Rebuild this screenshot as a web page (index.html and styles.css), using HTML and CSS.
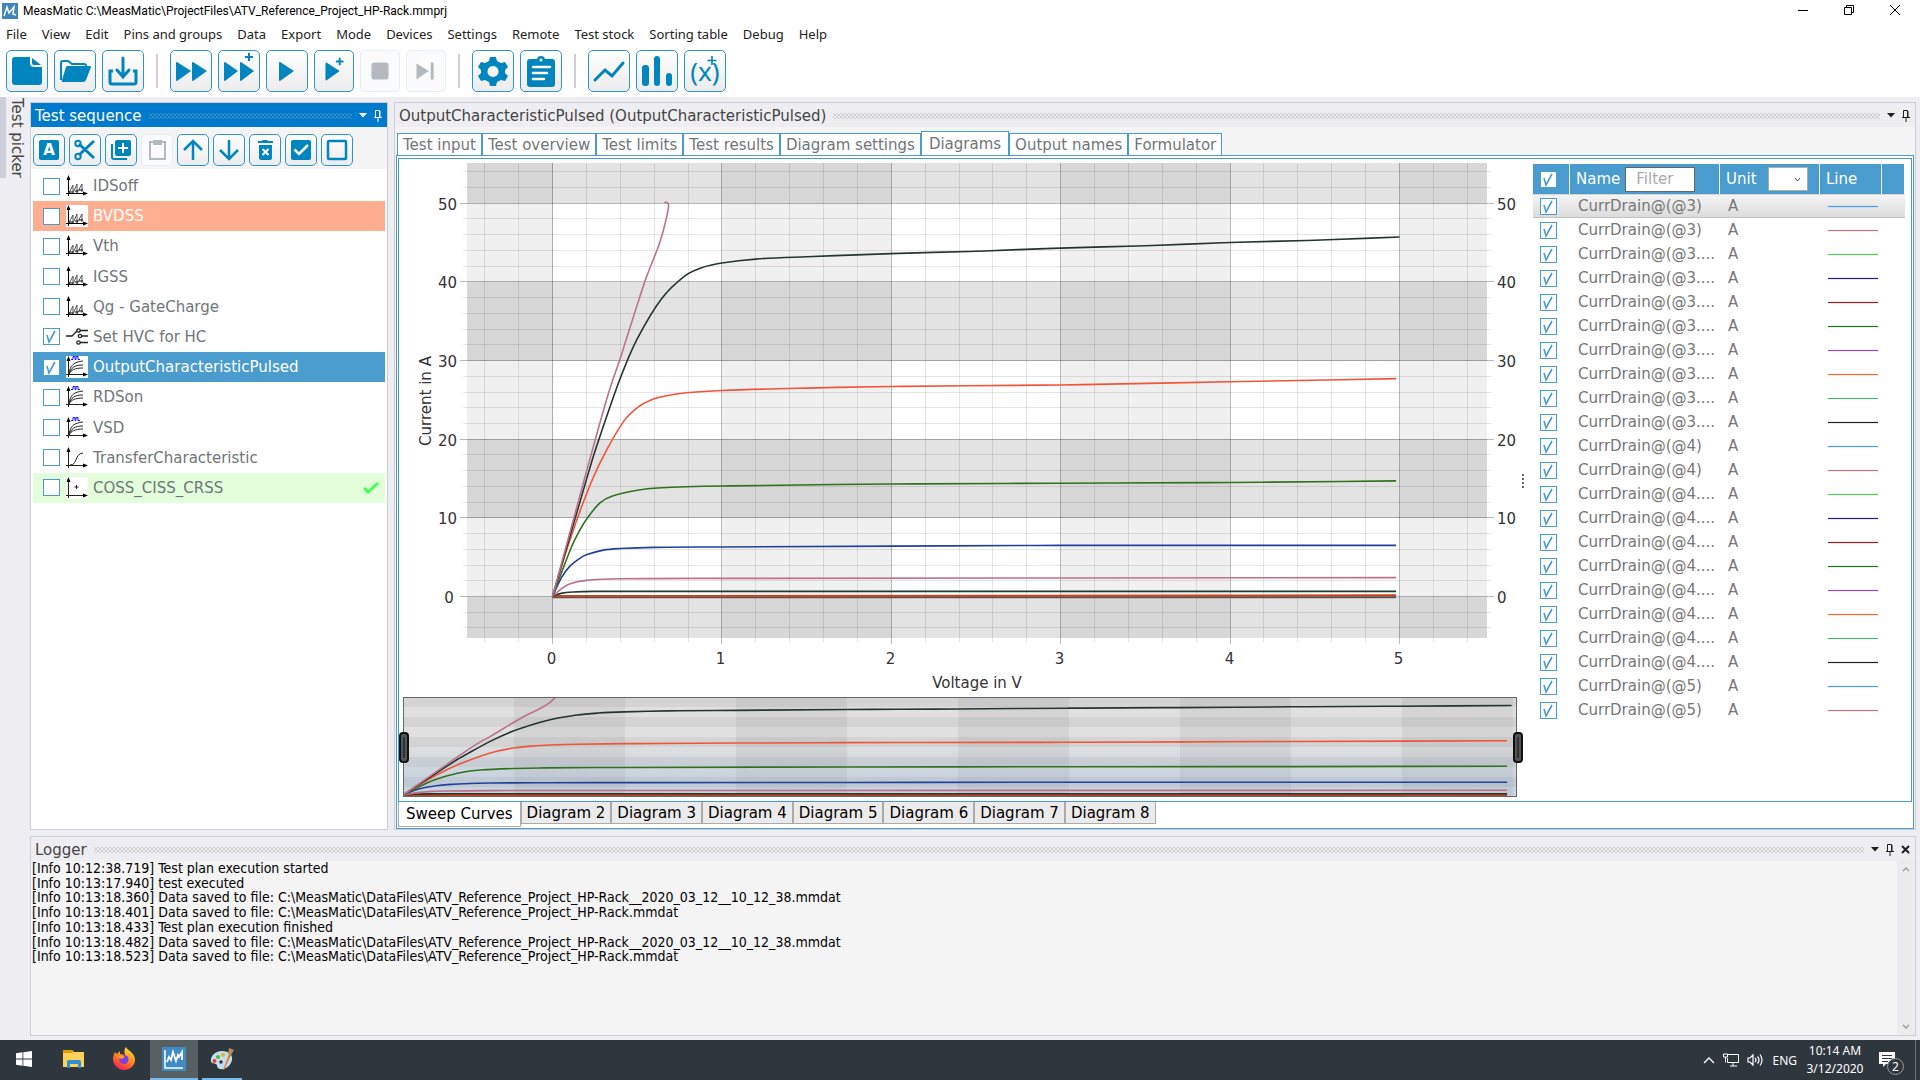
FILE: index.html
```html
<!DOCTYPE html>
<html lang="en">
  <head>
    <meta charset="utf-8" />
    <title>MeasMatic</title>
    <link rel="stylesheet" href="styles.css">
  </head>
  <body>
    <svg class="sprite" aria-hidden="true">
      <symbol id="i-multi" viewBox="0 0 22 22">
        <g fill="none" stroke="#000">
          <path d="M2.5 21V3M0 18.500H19"/>
          <path d="M3 18l4-8v8l4-9v9l5-9v8" stroke="#555"/>
          <path d="M3 17h4M9 16h3M13 15h4" stroke-width="1"/>
        </g>
        <path d="M2.500 0L.5 5h4zM22 18.500l-5-2v4z"/>
      </symbol>
      <symbol id="i-curves" viewBox="0 0 22 22">
        <g fill="none" stroke="#222">
          <path d="M2.500 21V3M0 18.500H19"/>
          <path d="M3 18C4 9 8 6 17 5M3 18c2-6 5-9 14-9M3 18c2-4 6-6 14-6"/>
        </g>
        <path d="M2.500 0L.5 5h4zM22 18.500l-5-2v4z"/>
        <path d="M5 3.500h2v-3h2v3h1v-3h2v3h2" fill="none" stroke="#11f"/>
      </symbol>
      <symbol id="i-transfer" viewBox="0 0 22 22">
        <path d="M2.500 21V3M0 18.500H19M4 18c8 0 4-11 13-12" fill="none" stroke="#222"/>
        <path d="M2.500 0L.5 5h4zM22 18.500l-5-2v4z"/>
      </symbol>
      <symbol id="i-point" viewBox="0 0 22 22">
        <path d="M2.500 21V3M0 18.500H19M10.500 8v4M8.500 10h4" fill="none" stroke="#222"/>
        <path d="M2.500 0L.5 5h4zM22 18.500l-5-2v4z"/>
      </symbol>
      <symbol id="i-switch" viewBox="0 0 22 22">
        <g fill="none" stroke="#222" stroke-width="1.300">
          <path d="M0 10h6l5-5M14 4.500h8M16 10h6M14 16.500h8"/>
          <circle cx="12.500" cy="4.500" r="1.700"/><circle cx="14" cy="10" r="1.700"/><circle cx="12.500" cy="16.500" r="1.700"/>
        </g>
      </symbol>
      <symbol id="i-pin" viewBox="0 0 8 12">
        <path d="M1.500 7V.5h4V7M0 7.500h8M4 8v4" fill="none" stroke="currentColor"/>
        <path d="M5 1h1.500v6H5z" fill="currentColor"/>
      </symbol>
      <symbol id="i-down" viewBox="0 0 8 5"><path d="M0 0h8L4 4.500z" fill="currentColor"/></symbol>
    </svg>

    <header class="titlebar">
      <svg class="app-logo" viewBox="0 0 16 16"><rect width="16" height="16" fill="#3d85bd"/><path d="M2 13L5 4l2 6 5-6-1 7 3 1" fill="none" stroke="#fff" stroke-width="1.500"/></svg>
      <span class="app-title">MeasMatic C:\MeasMatic\ProjectFiles\ATV_Reference_Project_HP-Rack.mmprj</span>
      <div class="window-buttons">
        <button aria-label="Minimize"><svg width="12" height="12" viewBox="0 0 12 12"><path d="M1 6.500h10" stroke="#000"/></svg></button>
        <button aria-label="Restore"><svg width="12" height="12" viewBox="0 0 12 12"><path d="M1.500 3.500h7v7h-7zM3.500 3V1.500h7v7H9" fill="none" stroke="#000"/></svg></button>
        <button aria-label="Close"><svg width="12" height="12" viewBox="0 0 12 12"><path d="M1 1l10 10M11 1L1 11" stroke="#000"/></svg></button>
      </div>
    </header>

    <nav class="menubar">
      <a href="#">File</a>
      <a href="#">View</a>
      <a href="#">Edit</a>
      <a href="#">Pins and groups</a>
      <a href="#">Data</a>
      <a href="#">Export</a>
      <a href="#">Mode</a>
      <a href="#">Devices</a>
      <a href="#">Settings</a>
      <a href="#">Remote</a>
      <a href="#">Test stock</a>
      <a href="#">Sorting table</a>
      <a href="#">Debug</a>
      <a href="#">Help</a>
    </nav>

    <div class="toolbar">
      <button class="tool" aria-label="New"><svg viewBox="0 0 40 40"><path d="M8 6h15v6q0 4 4 4h8v15q0 3-3 3H8q-3 0-3-3V9q0-3 3-3z"/><path d="M25 7v5q0 2 2 2h7z"/></svg></button>
      <button class="tool" aria-label="Open"><svg viewBox="0 0 40 40"><path d="M6 29V12q0-2 2-2h5l4 3h12q2 0 2 2" fill="none" stroke="#0085be" stroke-width="2"/><path d="M12 15h23q1 0 1 1l-5 13q-1 2-3 2H8q-2 0-1-2l4-13z"/></svg></button>
      <button class="tool" aria-label="Save"><svg viewBox="0 0 40 40"><path d="M20 7v18M14 19l6 7 6-7" fill="none" stroke="#0085be" stroke-width="3" stroke-linecap="round"/><path d="M10 20H7v11q0 2 2 2h22q2 0 2-2V20h-3" fill="none" stroke="#0085be" stroke-width="3"/></svg></button>
      <span class="separator"></span>
      <button class="tool" aria-label="Run all"><svg viewBox="0 0 40 40"><path d="M5 12q0-1 1-1l14 9-14 10q-1 0-1-1zM21 12q0-1 1-1l14 9-14 10q-1 0-1-1z"/></svg></button>
      <button class="tool" aria-label="Run all and add"><svg viewBox="0 0 40 40"><path d="M5 12q0-1 1-1l13 9-13 10q-1 0-1-1zM21 12q0-1 1-1l13 9-13 10q-1 0-1-1zM29 2h2v3h3v2h-3v3h-2V7h-3V5h3z"/></svg></button>
      <button class="tool" aria-label="Run"><svg viewBox="0 0 40 40"><path d="M12 12q0-1 1-1l14 9-14 10q-1 0-1-1z"/></svg></button>
      <button class="tool narrow" aria-label="Run and add"><svg viewBox="0 0 40 40"><path d="M11 12q0-1 1-1l14 9-14 10q-1 0-1-1zM25 6h2v3h3v2h-3v3h-2v-3h-3V9h3z"/></svg></button>
      <button class="tool narrow" disabled aria-label="Stop"><svg viewBox="0 0 40 40"><rect x="11" y="11" width="18" height="18" rx="3"/></svg></button>
      <button class="tool narrow" disabled aria-label="Step"><svg viewBox="0 0 40 40"><path d="M10 12l13 8-13 9zM25 11h3v18h-3z"/></svg></button>
      <span class="separator"></span>
      <button class="tool" aria-label="Settings"><svg viewBox="0 0 40 40"><path fill-rule="evenodd" d="M17 6h6l1 4 4 2 4-1 3 5-3 3v3l3 3-3 5-4-1-4 2-1 4h-6l-1-4-4-2-4 1-3-5 3-3v-3l-3-3 3-5 4 1 4-2zM20 15a5.500 5.500 0 1 0 .01 0z"/></svg></button>
      <button class="tool" aria-label="Report"><svg viewBox="0 0 40 40"><rect x="6" y="8" width="28" height="28" rx="3"/><circle cx="20" cy="9" r="4"/><circle cx="20" cy="9" r="1.500" fill="#fff"/><path d="M12 16h17M12 22h14M12 28h11" stroke="#fff" stroke-width="2.500" stroke-linecap="round"/></svg></button>
      <span class="separator"></span>
      <button class="tool" aria-label="Line chart"><svg viewBox="0 0 40 40"><path d="M6 29l10-10 7 6 11-13" fill="none" stroke="#0085be" stroke-width="3" stroke-linecap="round"/></svg></button>
      <button class="tool" aria-label="Bar chart"><svg viewBox="0 0 40 40"><rect x="5" y="14" width="7" height="21" rx="3"/><rect x="17" y="5" width="6" height="30" rx="3"/><rect x="29" y="22" width="6" height="13" rx="3"/></svg></button>
      <button class="tool formula" aria-label="Formula">(x)<svg viewBox="0 0 40 40"><path d="M27 5v9M22.500 9.500h9" stroke="#0085be" stroke-width="1.600"/></svg></button>
    </div>

    <main class="workspace">
      <aside class="side-strip"><button class="side-tab">Test picker</button></aside>

      <div class="docks">
        <div class="top-docks">
          <section class="panel sequence">
            <div class="panel-head active">
              <h2>Test sequence</h2>
              <span class="grip"></span>
              <svg width="8" height="5"><use href="#i-down"/></svg>
              <svg width="8" height="12"><use href="#i-pin"/></svg>
            </div>
            <div class="mini-toolbar">
              <button class="mini" aria-label="Auto"><span class="letter">A</span></button>
              <button class="mini" aria-label="Cut"><svg viewBox="0 0 30 30"><path d="M9 9l15 14M9 20L24 6" stroke="#0085be" stroke-width="3"/><circle cx="8" cy="8.500" r="2.700" fill="none" stroke="#0085be" stroke-width="2"/><circle cx="8" cy="21.500" r="2.700" fill="none" stroke="#0085be" stroke-width="2"/></svg></button>
              <button class="mini" aria-label="Copy"><svg viewBox="0 0 30 30"><path d="M6 9v13q0 2 2 2h13" fill="none" stroke="#0085be" stroke-width="2"/><rect x="9" y="5" width="16" height="16" rx="2"/><path d="M17 8v10M12 13h10" stroke="#fff" stroke-width="2"/></svg></button>
              <button class="mini" disabled aria-label="Paste"><svg viewBox="0 0 30 30"><path d="M8 7h15v17H8z" fill="none" stroke="#b2babd" stroke-width="2"/><path d="M11 5h9v5h-9z"/></svg></button>
              <button class="mini" aria-label="Move up"><svg viewBox="0 0 30 30"><path d="M15 25V6M6 15l9-9 9 9" fill="none" stroke="#0085be" stroke-width="2.500"/></svg></button>
              <button class="mini" aria-label="Move down"><svg viewBox="0 0 30 30"><path d="M15 5v19M6 15l9 9 9-9" fill="none" stroke="#0085be" stroke-width="2.500"/></svg></button>
              <button class="mini" aria-label="Delete"><svg viewBox="0 0 30 30"><path d="M8 6h4l1-1h4l1 1h5v2H8zM9 10h13v13q0 2-2 2h-9q-2 0-2-2z"/><path d="M12.500 14l6 6M18.500 14l-6 6" stroke="#fff" stroke-width="2"/></svg></button>
              <button class="mini" aria-label="Check all"><svg viewBox="0 0 30 30"><rect x="5" y="5" width="20" height="20" rx="2"/><path d="M8.500 14.500l4.500 4.500 9-9" fill="none" stroke="#fff" stroke-width="2.500"/></svg></button>
              <button class="mini" aria-label="Uncheck all"><svg viewBox="0 0 30 30"><rect x="6" y="6" width="18" height="18" rx="1" fill="none" stroke="#0085be" stroke-width="2.500"/></svg></button>
            </div>
            <ul class="tests">
              <li><label><input type="checkbox" class="check"><svg class="kind"><use href="#i-multi"/></svg>IDSoff</label></li>
              <li class="failed"><label><input type="checkbox" class="check"><svg class="kind"><use href="#i-multi"/></svg>BVDSS</label></li>
              <li><label><input type="checkbox" class="check"><svg class="kind"><use href="#i-multi"/></svg>Vth</label></li>
              <li><label><input type="checkbox" class="check"><svg class="kind"><use href="#i-multi"/></svg>IGSS</label></li>
              <li><label><input type="checkbox" class="check"><svg class="kind"><use href="#i-multi"/></svg>Qg - GateCharge</label></li>
              <li><label><input type="checkbox" class="check" checked><svg class="kind"><use href="#i-switch"/></svg>Set HVC for HC</label></li>
              <li class="selected"><label><input type="checkbox" class="check" checked><svg class="kind"><use href="#i-curves"/></svg>OutputCharacteristicPulsed</label></li>
              <li><label><input type="checkbox" class="check"><svg class="kind"><use href="#i-curves"/></svg>RDSon</label></li>
              <li><label><input type="checkbox" class="check"><svg class="kind"><use href="#i-curves"/></svg>VSD</label></li>
              <li><label><input type="checkbox" class="check"><svg class="kind"><use href="#i-transfer"/></svg>TransferCharacteristic</label></li>
              <li class="passed"><label><input type="checkbox" class="check"><svg class="kind"><use href="#i-point"/></svg>COSS_CISS_CRSS</label><svg class="ok" viewBox="0 0 16 12"><path d="M1 6l4 4L15 1" fill="none" stroke="#4f5" stroke-width="3"/></svg></li>
            </ul>
          </section>

          <section class="panel document">
            <div class="panel-head">
              <h2>OutputCharacteristicPulsed (OutputCharacteristicPulsed)</h2>
              <span class="grip"></span>
              <svg width="8" height="5"><use href="#i-down"/></svg>
              <svg width="8" height="12"><use href="#i-pin"/></svg>
            </div>
            <div class="tabs">
              <button>Test input</button>
              <button>Test overview</button>
              <button>Test limits</button>
              <button>Test results</button>
              <button>Diagram settings</button>
              <button class="current">Diagrams</button>
              <button>Output names</button>
              <button>Formulator</button>
            </div>
            <div class="page">
              <div class="diagram">
                <svg id="chart" class="chart" viewBox="0 0 1120 642" role="img" aria-label="Sweep curves"></svg>
                <div class="splitter"></div>
                <table class="curves">
                  <colgroup><col class="c-check"><col class="c-name"><col class="c-unit"><col class="c-line"><col></colgroup>
                  <thead>
                    <tr>
                      <th><input type="checkbox" class="check" checked aria-label="All curves"></th>
                      <th><div class="filter"><label for="nameFilter">Name</label><input id="nameFilter" type="text" placeholder="Filter"></div></th>
                      <th><div class="filter"><label for="unitFilter">Unit</label><select id="unitFilter"><option></option><option>A</option></select></div></th>
                      <th>Line</th>
                      <th></th>
                    </tr>
                  </thead>
                  <tbody id="curveRows"></tbody>
                </table>
              </div>
              <div class="sheet-tabs">
                <button class="current">Sweep Curves</button>
                <button>Diagram 2</button>
                <button>Diagram 3</button>
                <button>Diagram 4</button>
                <button>Diagram 5</button>
                <button>Diagram 6</button>
                <button>Diagram 7</button>
                <button>Diagram 8</button>
              </div>
            </div>
          </section>
        </div>

        <section class="panel logger">
          <div class="panel-head">
            <h2>Logger</h2>
            <span class="grip"></span>
            <svg width="8" height="5"><use href="#i-down"/></svg>
            <svg width="8" height="12"><use href="#i-pin"/></svg>
            <svg width="9" height="9" viewBox="0 0 9 9"><path d="M1 1l7 7M8 1L1 8" stroke="currentColor" stroke-width="2"/></svg>
          </div>
          <div class="log-body">
            <ul class="log">
              <li>[Info 10:12:38.719] Test plan execution started</li>
              <li>[Info 10:13:17.940] test executed</li>
              <li>[Info 10:13:18.360] Data saved to file: C:\MeasMatic\DataFiles\ATV_Reference_Project_HP-Rack__2020_03_12__10_12_38.mmdat</li>
              <li>[Info 10:13:18.401] Data saved to file: C:\MeasMatic\DataFiles\ATV_Reference_Project_HP-Rack.mmdat</li>
              <li>[Info 10:13:18.433] Test plan execution finished</li>
              <li>[Info 10:13:18.482] Data saved to file: C:\MeasMatic\DataFiles\ATV_Reference_Project_HP-Rack__2020_03_12__10_12_38.mmdat</li>
              <li>[Info 10:13:18.523] Data saved to file: C:\MeasMatic\DataFiles\ATV_Reference_Project_HP-Rack.mmdat</li>
            </ul>
            <div class="scrollbar">
              <svg width="8" height="5" viewBox="0 0 8 5"><path d="M1 4l3-3 3 3" fill="none" stroke="#a0a0a0" stroke-width="1.500"/></svg>
              <svg width="8" height="5" viewBox="0 0 8 5"><path d="M1 1l3 3 3-3" fill="none" stroke="#a0a0a0" stroke-width="1.500"/></svg>
            </div>
          </div>
        </section>
      </div>
    </main>

    <footer class="taskbar">
      <button class="task" aria-label="Start"><svg width="16" height="16" viewBox="0 0 16 16" fill="#fff"><path d="M0 2.200L6.500 1.300v6.300H0zM7.300 1.200L16 0v7.600H7.300zM0 8.400h6.500v6.300L0 13.800zM7.300 8.400H16V16l-8.700-1.200z"/></svg></button>
      <button class="task" aria-label="File Explorer"><svg width="22" height="18" viewBox="0 0 22 18"><path d="M0 0h9l2 2h10v15H0z" fill="#ffd35a"/><path d="M0 0h9l1 3H0z" fill="#e0a100"/><path d="M4 18v-6q0-2 2-2h10q2 0 2 2v6h-3v-4H7v4z" fill="#2f8fd6"/></svg></button>
      <button class="task" aria-label="Firefox"><svg width="24" height="24" viewBox="0 0 24 24"><defs><linearGradient id="fox" x1=".8" y1="0" x2=".3" y2="1"><stop offset="0" stop-color="#ffe53a"/><stop offset=".5" stop-color="#ff8a1c"/><stop offset="1" stop-color="#f5185c"/></linearGradient></defs><path d="M14 0c1 3 8 5 9 12 0 7-5 11-11 11S1 18 1 12c0-3 1-5 2-7l2 2 3-3v3l5 1c-1-3-1-6 1-8z" fill="url(#fox)"/><circle cx="12" cy="12.500" r="4.500" fill="#7a3fe0"/><path d="M6 9q3-2 6 0 1 2-2 2.500-2 1-4-2.500z" fill="#ff9a1c"/></svg></button>
      <button class="task active" aria-label="MeasMatic"><svg width="24" height="24" viewBox="0 0 24 24"><rect width="24" height="24" fill="#3f8cc4"/><path d="M3 3v18h18" fill="none" stroke="#fff" stroke-width="1.500"/><path d="M5 15l2-5 2 3 2-8 3 9 2-6 1 2 3-5v8" fill="none" stroke="#fff" stroke-width="1.800"/></svg></button>
      <button class="task open" aria-label="Paint"><svg width="24" height="24" viewBox="0 0 24 24"><path d="M12 4c7 0 11 4 10 9s-6 10-12 9c-4-1-2-4-4-5s-6 0-5-5 6-8 11-8z" fill="#c3e0f0"/><circle cx="13" cy="8" r="2" fill="#f0b020"/><circle cx="8" cy="10" r="2" fill="#58b030"/><circle cx="4.500" cy="14" r="2" fill="#e04040"/><circle cx="11" cy="15" r="1.700" fill="#26303a"/><path d="M13 23l6-16 2 1-7 15z" fill="#e07a20"/><path d="M18 7l1-6 5 2-3 5z" fill="#b98b62"/></svg></button>
      <div class="tray">
        <svg width="12" height="8" viewBox="0 0 12 8"><path d="M1 7l5-5 5 5" fill="none" stroke="#fff" stroke-width="1.300"/></svg>
        <svg width="16" height="14" viewBox="0 0 16 14"><path d="M5 1.500h10.500v8H4.500V5M.5 1h4v3h-4zM2.500 4v5.500M10 10v3M7 13h7" fill="none" stroke="#fff"/></svg>
        <svg width="17" height="14" viewBox="0 0 17 14"><path d="M1 5h2l3-3v10L3 9H1zM8 5q2 2 0 4M10.500 3.500q3 3.500 0 7M13 1.500q4 5.500 0 11" fill="none" stroke="#fff" stroke-width="1.200"/></svg>
        <span class="lang">ENG</span>
        <time class="clock"><span>10:14 AM</span><span>3/12/2020</span></time>
        <button class="notice" aria-label="Notifications"><svg width="16" height="16" viewBox="0 0 16 16"><path d="M0 0h16v12H7l-3 3v-3H0z" fill="#fff"/><path d="M3 3.500h10M3 6.500h10M3 9.500h6" stroke="#2f373e"/></svg><span class="count">2</span></button>
      </div>
    </footer>

    <script src="script.js"></script>
  </body>
</html>
```
FILE: styles.css
```css
* {
  box-sizing: border-box;
}
body {
  margin: 0;
  height: 100vh;
  display: flex;
  flex-direction: column;
  overflow: hidden;
  background: #eeeef2;
  color: #6d6d6d;
  font-family: Verdana, "DejaVu Sans", sans-serif;
  font-size: 15px;
}
button, input, select {
  font: inherit;
  color: inherit;
  margin: 0;
}
button {
  border: none;
  background: none;
  padding: 0;
}
ul {
  list-style: none;
  margin: 0;
  padding: 0;
}
.sprite {
  display: none;
}

/* Window title and menu */
.titlebar {
  display: flex;
  align-items: center;
  gap: 5px;
  height: 22px;
  padding-left: 2px;
  background: #fff;
  color: #000;
  font-family: "Segoe UI", Roboto, sans-serif;
  font-size: 12px;
}
.app-logo {
  width: 16px;
  height: 16px;
}
.window-buttons {
  display: flex;
  margin-left: auto;
  margin-right: 2px;
}
.window-buttons button {
  width: 46px;
  height: 20px;
}
.menubar {
  display: flex;
  align-items: center;
  gap: 15px;
  height: 24px;
  padding-left: 6px;
  background: #fff;
  font-family: "Segoe UI", "Noto Sans", sans-serif;
  font-size: 13px;
}
.menubar a {
  color: #222;
  text-decoration: none;
}

/* Toolbars */
.toolbar {
  display: flex;
  align-items: flex-start;
  gap: 6px;
  height: 51px;
  padding: 4px 6px;
  background: #fff;
}
.tool {
  width: 42px;
  height: 42px;
  border: 1px solid #2e93c8;
  border-radius: 5px;
  background: linear-gradient(#fff, #ececee);
}
.tool.narrow {
  width: 40px;
}
.tool svg, .mini svg {
  display: block;
  width: 100%;
  height: 100%;
  fill: #0085be;
}
.tool:disabled, .mini:disabled {
  border-color: #dff0f8;
  background: #fbfbfb;
}
.tool:disabled svg, .mini:disabled svg {
  fill: #b2babd;
}
.formula {
  position: relative;
  color: #0085be;
  font-family: "Segoe UI", "Noto Sans", sans-serif;
  font-size: 26px;
  line-height: 38px;
}
.formula svg {
  position: absolute;
  inset: 0;
}
.separator {
  width: 2px;
  height: 34px;
  margin: 4px 6px 0;
  background: #d0d0d0;
}
.mini-toolbar {
  display: flex;
  gap: 4px;
  height: 42px;
  padding: 7px 2px;
  background: #f4f4f4;
}
.mini {
  width: 32px;
  height: 32px;
  border: 1px solid #2e93c8;
  border-radius: 5px;
  background: linear-gradient(#fff, #ececee);
}
.letter {
  display: block;
  width: 20px;
  margin: 0 auto;
  border-radius: 2px;
  background: #0085be;
  color: #fff;
  font-weight: bold;
  line-height: 20px;
}

/* Docked panels */
.workspace {
  flex: 1;
  display: flex;
  min-height: 0;
  padding: 0 4px 4px 0;
}
.side-strip {
  width: 30px;
}
.side-tab {
  height: 81px;
  border-left: 6px solid #ccceda;
  color: #444;
  line-height: 22px;
  white-space: nowrap;
  writing-mode: vertical-rl;
}
.docks {
  flex: 1;
  display: flex;
  flex-direction: column;
  gap: 6px;
  min-width: 0;
  padding-top: 5px;
}
.top-docks {
  flex: 1;
  display: flex;
  gap: 6px;
  min-height: 0;
}
.panel {
  display: flex;
  flex-direction: column;
  border: 1px solid #ccceda;
}
.sequence {
  width: 358px;
  background: #fff;
}
.document {
  flex: 1;
  min-width: 0;
  background: #f4f4f4;
}
.logger {
  height: 200px;
}
.panel-head {
  display: flex;
  align-items: center;
  gap: 7px;
  height: 24px;
  padding: 1px 5px 0 4px;
  background: #eeeef2;
  color: #1e1e1e;
}
.panel-head.active {
  background: #007acc;
  color: #fff;
}
.panel-head h2 {
  margin: 0;
  color: #444;
  font-size: 15px;
  font-weight: normal;
  white-space: nowrap;
}
.panel-head.active h2 {
  color: #fff;
}
.grip {
  flex: 1;
  height: 6px;
  background: radial-gradient(circle, #bbb 1px, transparent 1px) 0 0 / 4px 4px, radial-gradient(circle, #bbb 1px, transparent 1px) 2px 2px / 4px 4px;
  opacity: .6;
}
.active .grip {
  opacity: .3;
}

/* Test list */
.tests {
  display: grid;
  grid-auto-rows: 1fr;
  height: 332px;
  margin: 2px 2px 0;
}
.tests li {
  display: flex;
  align-items: center;
  padding: 0 6px 0 10px;
  color: #6f7679;
}
.tests label {
  flex: 1;
  display: flex;
  align-items: center;
}
.kind {
  width: 22px;
  height: 22px;
  margin: 0 5px 0 6px;
  background: #fff;
}
.tests .failed {
  background: #ffae8f;
  color: #fff;
}
.tests .selected {
  background: #4a9bce;
  color: #fff;
}
.tests .passed {
  background: #e2fedb;
}
.ok {
  width: 16px;
  height: 12px;
}
.check {
  appearance: none;
  flex: none;
  display: block;
  width: 17px;
  height: 17px;
  border: 1px solid #4a9bce;
  background: #fff;
}
.check:checked {
  background: #fff url("data:image/svg+xml,%3Csvg xmlns='http://www.w3.org/2000/svg' viewBox='0 0 15 15'%3E%3Cpath d='M3 6l2 7L11 2' fill='none' stroke='%234a9bce' stroke-width='1.600'/%3E%3C/svg%3E");
}

/* Document tabs */
.tabs {
  display: flex;
  align-items: flex-end;
  height: 28px;
  padding-left: 2px;
}
.tabs button {
  height: 22px;
  padding: 0 5px;
  border: 1px solid #4a9bce;
  border-bottom: none;
  background: #fff;
  color: #6f7679;
  white-space: nowrap;
}
.tabs .current {
  height: 24px;
  padding: 0 7px;
}
.page {
  flex: 1;
  display: flex;
  flex-direction: column;
  min-height: 0;
  margin: 0 1px;
  border: 1px solid #4a9bce;
  background: #fff;
}
.diagram {
  flex: 1;
  display: flex;
  min-height: 0;
  margin: 2px 1px 0;
  padding-right: 6px;
  border: 1px solid #4a9bce;
}
.chart {
  flex: 1;
  min-width: 0;
  height: 100%;
  overflow: visible;
}
.chart text {
  fill: #333;
  font-size: 15px;
}
.splitter {
  align-self: center;
  width: 8px;
  height: 16px;
  margin-right: 6px;
  background: linear-gradient(#666 50%, transparent 0) center / 2px 4px repeat-y;
}
.sheet-tabs {
  display: flex;
  height: 26px;
  padding-left: 1px;
}
.sheet-tabs button {
  height: 22px;
  padding: 0 5px;
  border: 1px solid #aaa;
  border-top: none;
  background: #ebebeb;
  color: #000;
}
.sheet-tabs .current {
  height: 25px;
  padding: 0 7px;
  background: #fff;
}

/* Curve list */
.curves {
  align-self: flex-start;
  width: 372px;
  margin-top: 5px;
  border-collapse: separate;
  border-spacing: 0;
  table-layout: fixed;
}
.c-check {
  width: 37px;
}
.c-name {
  width: 150px;
}
.c-unit {
  width: 100px;
}
.c-line {
  width: 62px;
}
.curves th {
  height: 30px;
  padding: 0 6px;
  border-right: 1px solid #fff;
  background: #4a9bce;
  color: #fff;
  font-weight: normal;
  text-align: left;
}
.curves td {
  height: 24px;
  padding: 0 8px;
  color: #777;
  line-height: 20px;
  white-space: nowrap;
}
.curves .check {
  margin-left: 1px;
}
.curves td .check {
  margin-left: -1px;
}
.curves .focused td {
  border-top: 1px solid #d5d5d5;
  border-bottom: 1px solid #c4c4c4;
  background: linear-gradient(#f4f4f4, #dcdcdc);
}
.filter {
  display: flex;
  align-items: center;
  gap: 5px;
}
.filter input {
  width: 70px;
  height: 25px;
  padding: 0 10px;
  border: 1px solid #666;
  background: #fff;
  color: #333;
}
.filter input::placeholder {
  color: #aaa;
}
.filter select {
  appearance: none;
  width: 40px;
  height: 24px;
  margin-left: 6px;
  border: 1px solid #ababab;
  border-radius: 0;
  background: #fff url("data:image/svg+xml,%3Csvg xmlns='http://www.w3.org/2000/svg' viewBox='0 0 7 5'%3E%3Cpath d='M1 1l2.500 3L6 1' fill='none' stroke='%23444'/%3E%3C/svg%3E") right 6px center / 7px 5px no-repeat;
}
.swatch {
  display: block;
  width: 50px;
  height: 1px;
  background: currentColor;
  box-shadow: 0 0 1px currentColor;
}

/* Logger */
.log-body {
  flex: 1;
  display: flex;
  background: #f4f4f4;
}
.log {
  flex: 1;
  display: grid;
  grid-auto-rows: 1fr;
  height: 103px;
  padding-left: 1px;
  color: #000;
  font-family: Tahoma, "DejaVu Sans Condensed", "DejaVu Sans", sans-serif;
  font-size: 14px;
  line-height: 14px;
}
.scrollbar {
  display: flex;
  flex-direction: column;
  align-items: center;
  justify-content: space-between;
  width: 18px;
  padding: 6px 0;
  background: #ececee;
}

/* Windows taskbar */
.taskbar {
  display: flex;
  height: 40px;
  background: #2f373e;
  color: #fff;
  font-family: "Segoe UI", "Noto Sans", sans-serif;
  font-size: 12px;
}
.task {
  display: flex;
  align-items: center;
  justify-content: center;
  width: 48px;
  margin-right: 2px;
  border-bottom: 2px solid transparent;
}
.task.active {
  background: #566063;
  border-color: #76b9ed;
}
.task.open {
  width: 40px;
  margin-left: 2px;
  border-color: #76b9ed;
}
.tray {
  display: flex;
  align-items: center;
  gap: 8px;
  margin-left: auto;
  margin-right: 4px;
  border-right: 1px solid #6a7076;
}
.clock {
  display: flex;
  flex-direction: column;
  align-items: center;
  width: 60px;
  line-height: 18px;
}
.notice {
  position: relative;
  width: 42px;
  padding-left: 6px;
  text-align: left;
}
.notice svg {
  display: block;
}
.count {
  position: absolute;
  left: 14px;
  top: 6px;
  width: 17px;
  height: 17px;
  border: 1px solid #999;
  border-radius: 50%;
  background: #2f373e;
  color: #fff;
  font-size: 12px;
  line-height: 15px;
  text-align: center;
}
```
FILE: script.js
```js
const SVG_NS = 'http://www.w3.org/2000/svg';
const chart = document.getElementById('chart');

// plot area inside the chart svg
const plot = { left: 68, right: 1088, top: 4, bottom: 479, x0: 153.5, y0: 437.5, ux: 169.4, uy: 7.865 };
// overview strip below it
const nav = { left: 4, right: 1118, top: 538, bottom: 638, x0: 4, y0: 636, ux: 221.7, uy: 1.96 };

// measured points: voltage in V, current in A
const curves = [
  { color: '#555', width: 2, points: [[0, -0.1], [4.98, -0.1]] },
  { color: '#d0401c', width: 2, points: [[0, 0.05], [4.98, 0.15]] },
  { color: '#1f3a30', points: [[0, 0], [0.05, 0.4], [0.12, 0.58], [0.25, 0.65], [4.98, 0.65]] },
  { color: '#bf6f8a', points: [[0, 0], [0.05, 0.95], [0.1, 1.6], [0.2, 2.05], [0.4, 2.25], [1, 2.3], [4.98, 2.4]] },
  { color: '#22409a', points: [[0, 0], [0.053, 2.4], [0.1, 3.8], [0.15, 4.7], [0.2, 5.3], [0.3, 5.9], [0.4, 6.1], [0.6, 6.25], [1, 6.3], [2, 6.4], [3, 6.5], [4.98, 6.5]] },
  { color: '#33701f', points: [[0, 0], [0.11, 6.2], [0.15, 8], [0.2, 9.8], [0.28, 11.9], [0.35, 12.75], [0.5, 13.5], [0.62, 13.8], [1, 14.05], [2, 14.3], [3, 14.4], [4, 14.5], [4.98, 14.7]] },
  { color: '#f0553c', points: [[0, 0], [0.1, 7], [0.2, 13], [0.29, 17.4], [0.418, 22.2], [0.507, 24.1], [0.596, 25.1], [0.665, 25.5], [0.79, 25.9], [1, 26.2], [1.5, 26.5], [2, 26.7], [3, 26.9], [4, 27.3], [4.98, 27.7]] },
  { color: '#24352f', points: [[0, 0], [0.235, 17.4], [0.29, 21], [0.4, 27.75], [0.5, 32.75], [0.645, 37.9], [0.784, 40.8], [0.88, 41.8], [1, 42.4], [1.2, 42.9], [1.5, 43.2], [2, 43.6], [2.5, 43.9], [3, 44.3], [3.5, 44.6], [4, 45], [4.5, 45.3], [5, 45.7]] },
  { color: '#b9738a', points: [[0, 0], [0.22, 17.4], [0.33, 25.8], [0.4, 30.3], [0.487, 36.2], [0.556, 40.7], [0.625, 44.5], [0.655, 46.6], [0.68, 48.9], [0.685, 49.8], [0.675, 50.1], [0.66, 50.1]] }
];

function add(name, attrs, text) {
  const el = document.createElementNS(SVG_NS, name);
  for (const key in attrs) el.setAttribute(key, attrs[key]);
  if (text !== undefined) el.textContent = text;
  chart.appendChild(el);
  return el;
}

function line(x1, y1, x2, y2, opacity) {
  add('path', { d: `M${x1} ${y1}L${x2} ${y2}`, stroke: '#000', 'stroke-opacity': opacity });
}

function smoothPath(points, area) {
  const p = points.map(([v, a]) => [area.x0 + v * area.ux, area.y0 - a * area.uy]);
  let d = `M${p[0]}`;
  for (let i = 0; i < p.length - 1; i++) {
    const a = p[i - 1] || p[i], b = p[i], c = p[i + 1], e = p[i + 2] || c;
    // handles are limited to a third of the segment so that uneven steps do not overshoot
    const t = (n, q) => {
      const len = Math.hypot(q[0] - n[0], q[1] - n[1]) || 1;
      const seg = Math.hypot(c[0] - b[0], c[1] - b[1]) / 3;
      return [(q[0] - n[0]) / len * seg, (q[1] - n[1]) / len * seg];
    };
    const h1 = t(a, c), h2 = t(b, e);
    d += `C${b[0] + h1[0]} ${b[1] + h1[1]} ${c[0] - h2[0]} ${c[1] - h2[1]} ${c}`;
  }
  return d;
}

function drawPlot() {
  const xs = [plot.left], ys = [plot.top];
  for (let v = 0; v <= 5; v++) xs.push(Math.round(plot.x0 + v * plot.ux));
  for (let a = 50; a >= 0; a -= 10) ys.push(Math.round(plot.y0 - a * plot.uy));
  xs.push(plot.right);
  ys.push(plot.bottom);
  const fills = [['#d7d7d7', '#e3e3e3'], ['#f0f0f0', '#ffffff']];
  for (let r = 0; r < ys.length - 1; r++) {
    for (let c = 0; c < xs.length - 1; c++) {
      add('rect', { x: xs[c], y: ys[r], width: xs[c + 1] - xs[c], height: ys[r + 1] - ys[r], fill: fills[r % 2][c % 2] });
    }
  }

  for (let i = -2; i <= 27; i++) {
    const x = Math.floor(plot.x0 + i * plot.ux / 5) + 0.5;
    const major = i % 5 === 0;
    line(x, plot.top, x, plot.bottom + (major ? 6 : 4), major ? 0.28 : 0.1);
    if (major) add('text', { x: x - 1, y: 505, 'text-anchor': 'middle' }, i / 5);
  }
  for (let i = -2; i <= 27; i++) {
    const y = Math.floor(plot.y0 - i * plot.uy * 2) + 0.5;
    const major = i % 5 === 0;
    line(plot.left - (major ? 7 : 4), y, plot.right + (major ? 7 : 4), y, major ? 0.28 : 0.1);
    if (major) {
      add('text', { x: i === 0 ? 50 : 58, y: y + 6, 'text-anchor': i === 0 ? 'middle' : 'end' }, i * 2);
      add('text', { x: 1098, y: y + 6 }, i * 2);
    }
  }
  add('text', { x: 578, y: 529, 'text-anchor': 'middle' }, 'Voltage in V');
  add('text', { transform: 'translate(32 242) rotate(-90)', 'text-anchor': 'middle' }, 'Current in A');
}

function drawCurves(area) {
  for (const c of curves) {
    add('path', { d: smoothPath(c.points, area), fill: 'none', stroke: c.color, 'stroke-width': c.width || 1.6, 'clip-path': area === nav ? 'url(#navClip)' : 'none' });
  }
}

function drawHandle(x) {
  add('rect', { x: x - 4, y: 574, width: 8, height: 29, rx: 3, fill: '#555', stroke: '#111', 'stroke-width': 2 });
  add('path', { d: `M${x} 578v21`, stroke: '#111', 'stroke-width': 1 });
}

function drawNav() {
  const defs = add('defs', {});
  defs.innerHTML = '<clipPath id="navClip"><rect x="4" y="538" width="1114" height="100"/></clipPath>' +
    '<linearGradient id="navShade" x1="0" y1="0" x2="0" y2="1">' +
    '<stop offset=".45" stop-color="#6f9fd8" stop-opacity="0"/><stop offset=".8" stop-color="#6f9fd8" stop-opacity=".2"/></linearGradient>';
  add('rect', { x: 4, y: 538, width: 1114, height: 100, fill: '#e0e0e0' });
  for (let i = 1; i <= 9; i += 2) {
    const x = nav.left + i * 111;
    add('rect', { x, y: 538, width: Math.min(111, nav.right - x), height: 100, fill: '#000', 'fill-opacity': 0.05 });
  }
  for (let i = 0; i < 5; i++) {
    add('rect', { x: 4, y: 538 + i * 20, width: 1114, height: 10, fill: '#000', 'fill-opacity': 0.05 });
  }
  add('rect', { x: 4, y: 538, width: 1114, height: 100, fill: 'url(#navShade)' });
  drawCurves(nav);
  add('rect', { x: 4.5, y: 538.5, width: 1113, height: 99, fill: 'none', stroke: '#666' });
  drawHandle(5);
  drawHandle(1119);
}

drawPlot();
drawCurves(plot);
drawNav();

// curve list
const lineColors = ['#4a9bff', '#d0707a', '#55cf50', '#1c1c9c', '#9c1c24', '#157a15', '#8f48e0', '#ff6a2a', '#4fb37f', '#222222'];
const rows = document.getElementById('curveRows');
for (let i = 0; i < 22; i++) {
  const gate = 3 + Math.floor(i / 10);
  const name = i % 10 < 2 ? `CurrDrain@(@${gate})` : `CurrDrain@(@${gate}....`;
  rows.insertAdjacentHTML('beforeend', `
    <tr class="${i === 0 ? 'focused' : ''}">
      <td><input type="checkbox" class="check" checked aria-label="${name}"></td>
      <td>${name}</td>
      <td>A</td>
      <td><span class="swatch" style="color: ${lineColors[i % 10]}"></span></td>
      <td></td>
    </tr>`);
}
```
